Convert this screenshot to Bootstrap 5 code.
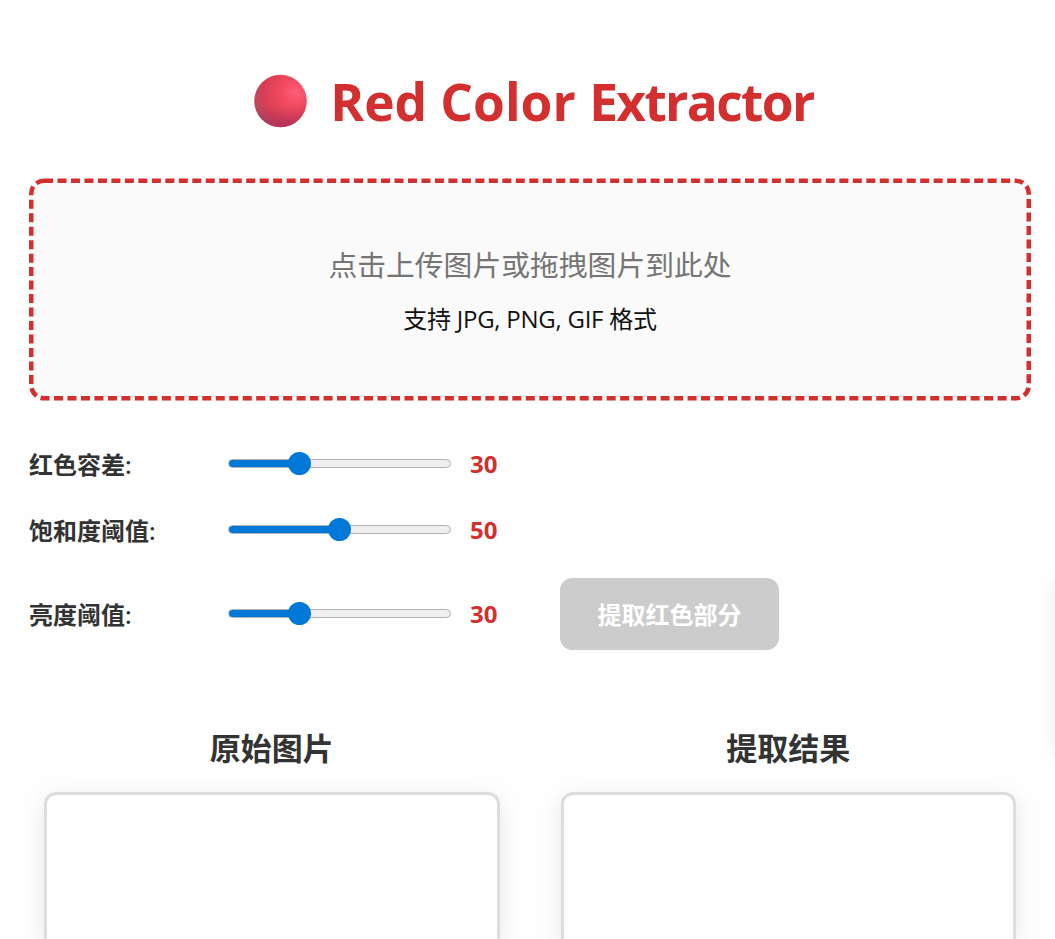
<!DOCTYPE html>
<html lang="zh-CN">
<head>
  <meta charset="UTF-8" />
  <meta name="viewport" content="width=device-width, initial-scale=1" />
  <title>Red Color Extractor</title>
  <link href="https://cdn.jsdelivr.net/npm/bootstrap@5.3.0/dist/css/bootstrap.min.css" rel="stylesheet" />
  <style>
    body {
      font-family: "Open Sans", "Noto Sans CJK SC", sans-serif;
      font-size: 24px;
      line-height: 36px;
      color: #333;
      height: 939px;
      background: #fefefe;
    }
    .page { padding: 65px 24px 0 29px; }
    .app-title {
      color: #d32f2f;
      font-size: 51.4px;
      line-height: 72px;
      height: 113px;
      padding-left: 8px;
    }
    .title-text { white-space: nowrap; margin-left: 23px; }
    .title-tight { letter-spacing: -1.6px; }
    .upload-area {
      height: 223px;
      border-radius: 15px;
      background: #fafafa;
      cursor: pointer;
    }
    .upload-text { font-size: 28.8px; line-height: 44px; color: #757575; }
    .upload-hint { margin-top: 14px; color: #111; letter-spacing: -0.25px; }
    .controls { margin-top: 45px; }
    .control-row { height: 36px; }
    .control-row + .control-row { margin-top: 30px; }
    .control-row.with-action { height: 72px; }
    .control-name { width: 199px; padding-top: 2px; font-weight: 600; }
    .control-value { width: 90px; margin-left: 19px; color: #d32f2f; }

    .slider { width: 223px; height: 24px; margin-bottom: 2px; }
    .slider::-webkit-slider-runnable-track {
      height: 9px;
      border: 1px solid #b2b2b2;
      border-radius: 5px;
      background: linear-gradient(to right, #0078d7 var(--fill), #efefef var(--fill)) border-box;
    }
    .slider::-webkit-slider-thumb {
      width: 23px;
      height: 23px;
      margin-top: -8px;
      background: #0078d7;
    }
    .btn-extract {
      width: 219px;
      height: 72px;
      padding-top: 8px;
      font-size: 24px;
      font-weight: 700;
      border-radius: 12px;
    }
    .btn-extract:disabled { background: #ccc; border-color: #ccc; color: #fff; opacity: 1; }

    .results { --bs-gutter-x: 31px; margin-top: 78px; }
    .result-title { font-size: 31px; line-height: 40px; margin-bottom: 24px; font-weight: 700; }
    .canvas-box {
      height: 147px;
      margin: 0 15px;
      border: 3px solid #ddd;
      border-bottom: 0;
      border-radius: 12px 12px 0 0;
      background: #fefefe;
      box-shadow: 0 6px 22px rgba(0, 0, 0, 0.1);
    }
    /* collapsed toolbar parked just past the right edge */
    .side-tab {
      left: 1057px;
      top: 582px;
      width: 60px;
      height: 170px;
      box-shadow: 0 0 18px rgba(0, 0, 0, 0.1);
    }
  </style>
</head>
<body class="position-relative overflow-hidden">
  <div class="page">
    <h1 class="app-title d-flex align-items-start justify-content-center fw-bold mb-0">
      <svg class="title-ball" width="53" height="72" viewBox="0 0 53 72" aria-hidden="true">
        <defs>
          <radialGradient id="ball" cx="0.78" cy="0.33" r="0.8">
            <stop offset="0" stop-color="#ff5c7c" />
            <stop offset="0.35" stop-color="#ef4a5e" />
            <stop offset="0.75" stop-color="#d83e52" />
            <stop offset="1" stop-color="#b84a5e" />
          </radialGradient>
          <linearGradient id="shade" x1="0" y1="0" x2="0" y2="1">
            <stop offset="0.6" stop-color="#a52a5c" stop-opacity="0" />
            <stop offset="1" stop-color="#a52a5c" stop-opacity="0.6" />
          </linearGradient>
        </defs>
        <circle cx="26.5" cy="36" r="26.3" fill="url(#ball)" />
        <circle cx="26.5" cy="36" r="26.3" fill="url(#shade)" />
      </svg>
      <span class="title-text">Red Color <span class="title-tight">Extractor</span></span>
    </h1>

    <!-- Upload area -->
    <div class="upload-area position-relative d-flex flex-column align-items-center justify-content-center" id="uploadArea">
      <svg class="position-absolute top-0 start-0" width="1002" height="223" aria-hidden="true">
        <rect x="2.25" y="2.75" width="997.5" height="217.5" rx="12.75" fill="none" stroke="#d32f2f" stroke-width="4.5" stroke-dasharray="9 4.48" />
      </svg>
      <div class="upload-text">点击上传图片或拖拽图片到此处</div>
      <div class="upload-hint">支持 JPG, PNG, GIF 格式</div>
    </div>

    <!-- Thresholds -->
    <div class="controls">
      <div class="control-row d-flex align-items-center">
        <label class="control-name" for="tolerance">红色容差:</label>
        <input type="range" class="form-range slider" id="tolerance" min="0" max="100" value="30" />
        <span class="control-value fw-bold">30</span>
      </div>
      <div class="control-row d-flex align-items-center">
        <label class="control-name" for="saturation">饱和度阈值:</label>
        <input type="range" class="form-range slider" id="saturation" min="0" max="100" value="50" />
        <span class="control-value fw-bold">50</span>
      </div>
      <div class="control-row with-action d-flex align-items-center">
        <label class="control-name" for="brightness">亮度阈值:</label>
        <input type="range" class="form-range slider" id="brightness" min="0" max="100" value="30" />
        <span class="control-value fw-bold">30</span>
        <button type="button" class="btn btn-extract" disabled>提取红色部分</button>
      </div>
    </div>

    <!-- Image previews -->
    <div class="row results">
      <div class="col-6">
        <h3 class="result-title text-center">原始图片</h3>
        <div class="canvas-box"></div>
      </div>
      <div class="col-6">
        <h3 class="result-title text-center">提取结果</h3>
        <div class="canvas-box"></div>
      </div>
    </div>
  </div>
  <div class="side-tab position-absolute"></div>

  <script src="https://cdn.jsdelivr.net/npm/bootstrap@5.3.0/dist/js/bootstrap.bundle.min.js"></script>
  <script>
    document.querySelectorAll('.slider').forEach(slider => {
      const value = slider.nextElementSibling;
      const update = () => {
        value.textContent = slider.value;
        slider.style.setProperty('--fill', slider.value + '%');
      };
      slider.addEventListener('input', update);
      update();
    });
  </script>
</body>
</html>
